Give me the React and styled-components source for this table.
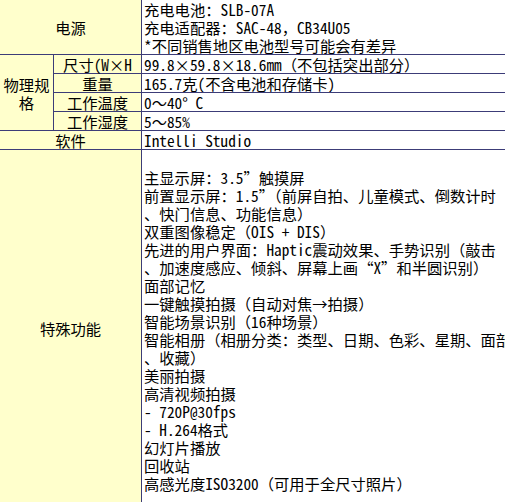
import React from "react";
import styled, { createGlobalStyle } from "styled-components";

const Global = createGlobalStyle`
  html, body {
    margin: 0;
    padding: 0;
    overflow: hidden;
    background: #ffffff;
  }
  body {
    font-family: "Noto Sans Mono CJK SC", "Noto Sans CJK SC", "Liberation Mono", monospace;
    font-size: 15.3px;
    color: #000000;
  }
`;

const LINE = "#3c3c78";

const Table = styled.div`
  display: grid;
  grid-template-columns: 54px 88px 1fr;
  width: 512px;
  line-height: 18px;
`;

const Label = styled.div`
  grid-column: ${(p) => (p.$wide ? "1 / 3" : "auto")};
  grid-row: ${(p) => (p.$rows ? `span ${p.$rows}` : "auto")};
  background: #ffffcc;
  border-right: 1px solid ${LINE};
  border-bottom: 1px solid ${LINE};
  display: flex;
  align-items: center;
  justify-content: center;
  text-align: center;
  white-space: ${(p) => (p.$wrap ? "normal" : "nowrap")};
`;

const Content = styled.div`
  background: #ffffff;
  border-right: 1px solid ${LINE};
  border-bottom: 1px solid ${LINE};
  padding: 0 0 ${(p) => p.$bottom || 0}px 2px;
  white-space: nowrap;
  overflow: hidden;
`;

const Line = styled.div`
  height: 18px;
`;

const power = [
  "充电电池：SLB-07A",
  "充电适配器：SAC-48，CB34U05",
  "*不同销售地区电池型号可能会有差异",
];

const physical = [
  ["尺寸(W×H", "99.8×59.8×18.6mm（不包括突出部分）"],
  ["重量", "165.7克(不含电池和存储卡)"],
  ["工作温度", "0～40° C"],
  ["工作湿度", "5～85%"],
];

const features = [
  "",
  "主显示屏：3.5”触摸屏",
  "前置显示屏：1.5”（前屏自拍、儿童模式、倒数计时",
  "、快门信息、功能信息）",
  "双重图像稳定（OIS + DIS）",
  "先进的用户界面：Haptic震动效果、手势识别（敲击",
  "、加速度感应、倾斜、屏幕上画“X”和半圆识别）",
  "面部记忆",
  "一键触摸拍摄（自动对焦→拍摄）",
  "智能场景识别（16种场景）",
  "智能相册（相册分类：类型、日期、色彩、星期、面部",
  "、收藏）",
  "美丽拍摄",
  "高清视频拍摄",
  "- 720P@30fps",
  "- H.264格式",
  "幻灯片播放",
  "回收站",
  "高感光度ISO3200（可用于全尺寸照片）",
];

export default function App() {
  return (
    <>
      <Global />
      <Table>
        <Label $wide>电源</Label>
        <Content>
          {power.map((t, i) => (
            <Line key={i}>{t}</Line>
          ))}
        </Content>

        <Label $rows={4} $wrap>
          物理规格
        </Label>
        {physical.map(([k, v]) => (
          <React.Fragment key={k}>
            <Label>{k}</Label>
            <Content>
              <Line>{v}</Line>
            </Content>
          </React.Fragment>
        ))}

        <Label $wide>软件</Label>
        <Content>
          <Line>Intelli Studio</Line>
        </Content>

        <Label $wide>特殊功能</Label>
        <Content $bottom={14}>
          {features.map((t, i) => (
            <Line key={i}>{t}</Line>
          ))}
        </Content>
      </Table>
    </>
  );
}
